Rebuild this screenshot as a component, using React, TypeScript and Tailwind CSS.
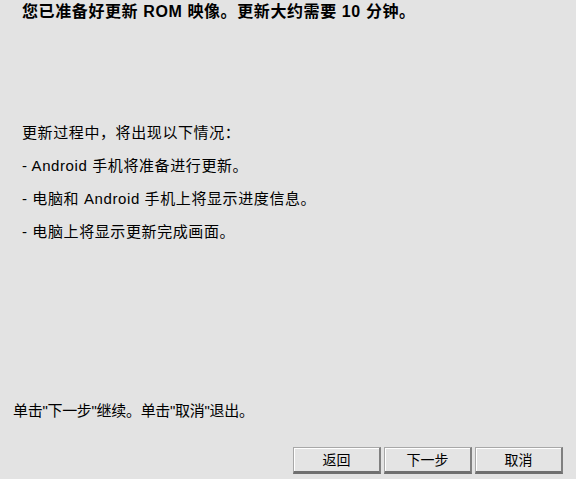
import React from 'react';

const font = { fontFamily: '"Liberation Sans", "Noto Sans CJK SC", sans-serif' };

const Btn: React.FC<{ label: string }> = ({ label }) => (
  <button className="w-[88px] h-[27px] bg-[#e4e4e4] border border-[#a8a8a8] border-b-[3px] border-r-2 border-b-[#707070] border-r-[#808080] shadow-[inset_1px_1px_0_#ffffff] text-[14px] text-black leading-none">
    {label}
  </button>
);

export default function App() {
  const items = [
    '- Android 手机将准备进行更新。',
    '- 电脑和 Android 手机上将显示进度信息。',
    '- 电脑上将显示更新完成画面。',
  ];
  return (
    <div className="w-[576px] h-[479px] bg-[#e3e3e3] text-black flex flex-col overflow-hidden" style={font}>
      <h1 className="pl-[22px] pt-[3px] text-[16px] font-bold leading-[18px] tracking-[0.6px]">
        您已准备好更新 ROM 映像。更新大约需要 10 分钟。
      </h1>
      <div className="pl-[22px] pt-[103px] flex flex-col gap-[15px] text-[15px] leading-[18px] tracking-[0.6px]">
        <p>更新过程中，将出现以下情况：</p>
        {items.map((t) => (
          <p key={t}>{t}</p>
        ))}
      </div>
      <p className="pl-[13px] mt-auto text-[15px] leading-[18px] tracking-[-0.3px]">单击"下一步"继续。单击"取消"退出。</p>
      <div className="flex justify-end gap-[3px] pr-[13px] pt-[27px] pb-[5px]">
        <Btn label="返回" />
        <Btn label="下一步" />
        <Btn label="取消" />
      </div>
    </div>
  );
}
